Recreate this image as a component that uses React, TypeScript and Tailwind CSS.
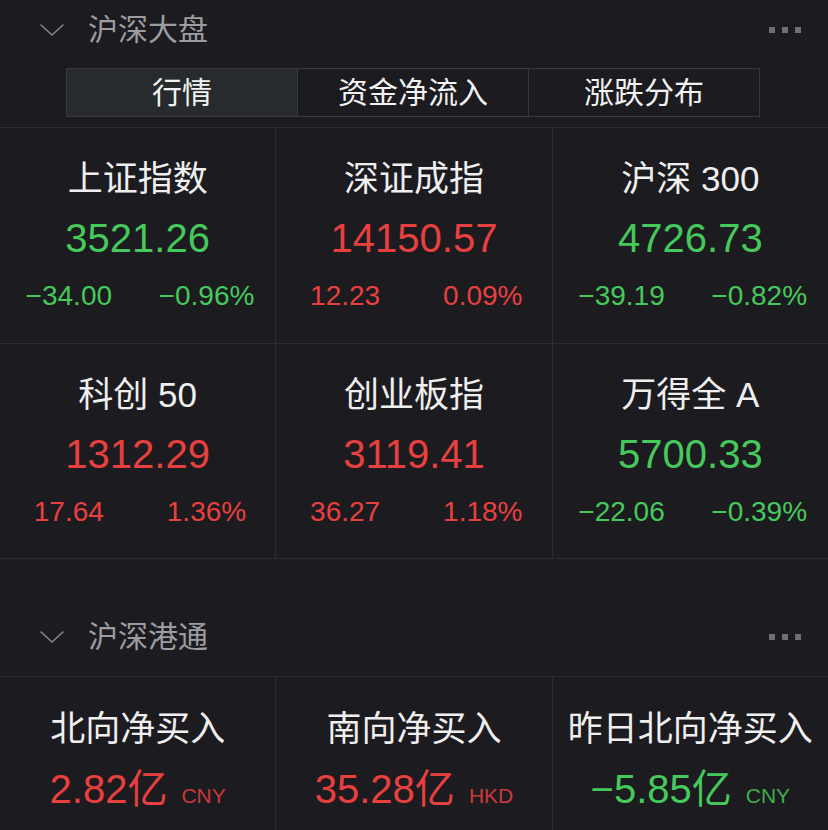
import React from "react";

type Quote = {
  name: string;
  price: string;
  change: string;
  pct: string;
  up: boolean;
};

type Flow = {
  name: string;
  amount: string;
  unit: string;
  up: boolean;
};

const quotes: Quote[] = [
  { name: "上证指数", price: "3521.26", change: "−34.00", pct: "−0.96%", up: false },
  { name: "深证成指", price: "14150.57", change: "12.23", pct: "0.09%", up: true },
  { name: "沪深 300", price: "4726.73", change: "−39.19", pct: "−0.82%", up: false },
  { name: "科创 50", price: "1312.29", change: "17.64", pct: "1.36%", up: true },
  { name: "创业板指", price: "3119.41", change: "36.27", pct: "1.18%", up: true },
  { name: "万得全 A", price: "5700.33", change: "−22.06", pct: "−0.39%", up: false },
];

const flows: Flow[] = [
  { name: "北向净买入", amount: "2.82亿", unit: "CNY", up: true },
  { name: "南向净买入", amount: "35.28亿", unit: "HKD", up: true },
  { name: "昨日北向净买入", amount: "−5.85亿", unit: "CNY", up: false },
];

const tabs = ["行情", "资金净流入", "涨跌分布"];

const FONT = '"Liberation Sans", "Noto Sans CJK SC", sans-serif';

function SectionHeader({ title }: { title: string }) {
  return (
    <div className="flex h-full items-center pl-[40px] pr-[27px]">
      <svg width="24" height="14" viewBox="0 0 24 14" className="shrink-0">
        <polyline
          points="1,2 12,12 23,2"
          fill="none"
          stroke="#85858a"
          strokeWidth="1.6"
          strokeLinecap="round"
          strokeLinejoin="round"
        />
      </svg>
      <span className="ml-[24px] text-[30px] leading-[40px] text-[#9d9da1]">{title}</span>
      <div className="ml-auto flex gap-[7px]">
        <span className="h-[6px] w-[6px] bg-[#6f6f74]" />
        <span className="h-[6px] w-[6px] bg-[#6f6f74]" />
        <span className="h-[6px] w-[6px] bg-[#6f6f74]" />
      </div>
    </div>
  );
}

function QuoteCell({ q }: { q: Quote }) {
  const color = q.up ? "text-[#e8403f]" : "text-[#45c95b]";
  return (
    <div className="flex h-full flex-col bg-[#1c1b20] pt-[31px] text-center">
      <div className="text-[35px] leading-[40px] text-[#efefef]">{q.name}</div>
      <div className={`mt-[15px] text-[40px] leading-[48px] ${color}`}>{q.price}</div>
      <div className={`mt-[16px] grid grid-cols-2 text-[28px] leading-[36px] ${color}`}>
        <span>{q.change}</span>
        <span>{q.pct}</span>
      </div>
    </div>
  );
}

function FlowCell({ f }: { f: Flow }) {
  const color = f.up ? "text-[#e8403f]" : "text-[#45c95b]";
  return (
    <div className="flex h-full flex-col bg-[#1c1b20] pt-[32px] text-center">
      <div className="text-[35px] leading-[40px] text-[#efefef]">{f.name}</div>
      <div className={`mt-[16px] flex items-baseline justify-center leading-[48px] ${color}`}>
        <span className="text-[40px]">{f.amount}</span>
        <span className="ml-[14px] text-[21px] opacity-85">{f.unit}</span>
      </div>
    </div>
  );
}

export default function App() {
  return (
    <div className="h-[830px] w-[828px] overflow-hidden bg-[#1c1b20]" style={{ fontFamily: FONT }}>
      <div className="h-[60px]">
        <SectionHeader title="沪深大盘" />
      </div>

      <div className="ml-[66px] mt-[8px] flex h-[49px] w-[694px] border border-[#38383d]">
        {tabs.map((t, i) => (
          <div
            key={t}
            className={`flex flex-1 items-center justify-center text-[30px] leading-[40px] text-[#f2f2f2] ${
              i > 0 ? "border-l border-[#38383d]" : ""
            } ${i === 0 ? "bg-[#272b2d]" : ""}`}
          >
            {t}
          </div>
        ))}
      </div>

      <div className="mt-[10px] grid grid-cols-3 grid-rows-[215px_214px] gap-px border-y border-[#2c2c31] bg-[#2c2c31]">
        {quotes.map((q) => (
          <QuoteCell key={q.name} q={q} />
        ))}
      </div>

      <div className="mt-[38px] h-[80px] border-b border-[#2c2c31]">
        <SectionHeader title="沪深港通" />
      </div>

      <div className="grid h-[200px] grid-cols-3 gap-px bg-[#2c2c31]">
        {flows.map((f) => (
          <FlowCell key={f.name} f={f} />
        ))}
      </div>
    </div>
  );
}
